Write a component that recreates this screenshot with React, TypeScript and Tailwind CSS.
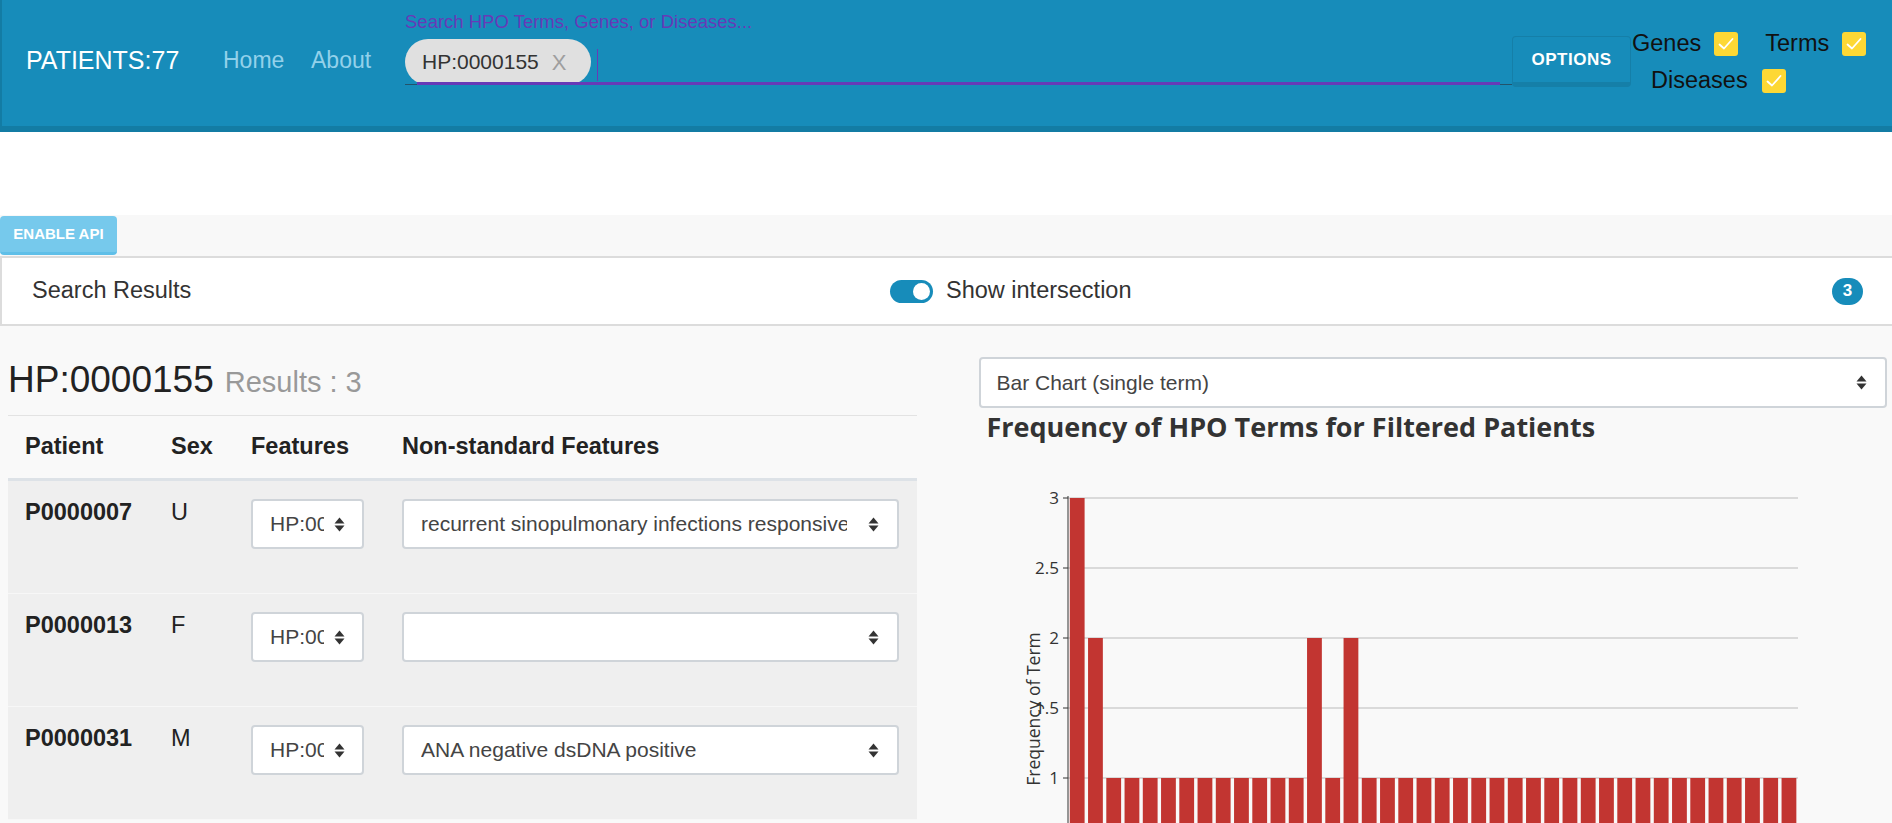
import React from "react";

function Check() {
  return (
    <span className="inline-flex h-[24px] w-[24px] items-center justify-center rounded-[3px] bg-[#fdd835]">
      <svg width="20" height="20" viewBox="0 0 20 20">
        <path d="M3.5 10.5 L8 14.5 L16.5 5" fill="none" stroke="#fff" strokeWidth="1.8" strokeLinecap="round" strokeLinejoin="round" />
      </svg>
    </span>
  );
}

function Arrows() {
  return (
    <svg width="13" height="17" viewBox="0 0 13 17" className="shrink-0">
      <path d="M6.5 1.5 L11.5 7.5 H1.5 Z" fill="#333" />
      <path d="M6.5 15.5 L11.5 9.5 H1.5 Z" fill="#333" />
    </svg>
  );
}

const bars: number[] = [3, 2, 1, 1, 1, 1, 1, 1, 1, 1, 1, 1, 1, 2, 1, 2, ...Array(24).fill(1)];

function Chart() {
  const y = (v: number) => 52 + (3 - v) * 140;
  const ticks = [
    { v: 3, l: "3" },
    { v: 2.5, l: "2.5" },
    { v: 2, l: "2" },
    { v: 1.5, l: "1.5" },
    { v: 1, l: "1" },
  ];
  return (
    <svg width="908" height="380" viewBox="0 0 908 380" className="block" style={{ fontFamily: "'Open Sans', 'Liberation Sans', sans-serif" }}>
      {ticks.map((t) => (
        <g key={t.l}>
          <line x1="89" x2="819" y1={y(t.v)} y2={y(t.v)} stroke="#cfcfcf" strokeWidth="1.5" />
          <line x1="84" x2="89" y1={y(t.v)} y2={y(t.v)} stroke="#333" strokeWidth="1" />
          <text x="80" y={y(t.v) + 6} textAnchor="end" fontSize="17" fill="#333">{t.l}</text>
        </g>
      ))}
      {bars.map((v, i) => (
        <rect key={i} x={89 + i * 18.25 + 1.8} y={y(v)} width="14.8" height={380 - y(v)} fill="#c23531" />
      ))}
      <line x1="89" x2="89" y1="50" y2="380" stroke="#333" strokeWidth="1" />
      <text x="56" y="263" transform="rotate(-90 56 263)" textAnchor="middle" dominantBaseline="middle" fontSize="17.5" fill="#333">Frequency of Term</text>
    </svg>
  );
}

function Select({ text, narrow }: { text: string; narrow?: boolean }) {
  if (narrow) {
    return (
      <div className="flex h-[50px] w-[113px] items-center rounded-[4px] border-2 border-[#cfd4d9] bg-white pl-[17px] pr-[15px]">
        <span className="w-[54px] min-w-0 overflow-hidden whitespace-nowrap text-[21px] text-[#444]">{text}</span>
        <span className="ml-[9px] flex"><Arrows /></span>
      </div>
    );
  }
  return (
    <div className="flex h-[50px] w-full min-w-0 items-center rounded-[4px] border-2 border-[#cfd4d9] bg-white pl-[17px] pr-[17px]">
      <span className="mr-[20px] min-w-0 flex-1 overflow-hidden whitespace-nowrap text-[21px] text-[#444]">{text}</span>
      <Arrows />
    </div>
  );
}

const rows = [
  { id: "P0000007", sex: "U", ns: "recurrent sinopulmonary infections responsive to antibiotics" },
  { id: "P0000013", sex: "F", ns: "" },
  { id: "P0000031", sex: "M", ns: "ANA negative dsDNA positive" },
];

export default function App() {
  return (
    <div className="h-[823px] w-full overflow-hidden bg-[#f9f9f9] text-[#333]" style={{ fontFamily: "'Liberation Sans', Arial, sans-serif" }}>
      {/* Header */}
      <header className="flex h-[132px] items-start border-b-[6px] border-l-2 border-[#137ca4] bg-[#178cba]">
        <div className="mt-[45px] w-[221px] pl-[24px] text-[25px] leading-[30px] text-white">PATIENTS:77</div>
        <div className="mt-[46px] w-[88px] text-[23px] leading-[28px] text-[#93d1ea]">Home</div>
        <div className="mt-[46px] w-[94px] text-[23px] leading-[28px] text-[#93d1ea]">About</div>
        <div className="w-[1107px]">
          <div className="mt-[11px] text-[18.5px] leading-[22px] text-[#673ab7]">Search HPO Terms, Genes, or Diseases...</div>
          <div className="relative mt-[6px] flex h-[46px] items-start border-b border-[#23536b]">
            <div className="flex h-[46px] items-center rounded-full bg-[#e0e0e0] pl-[17px] pr-[25px]">
              <span className="text-[21px] text-[#333]">HP:0000155</span>
              <span className="ml-[13px] text-[22px] text-[#9e9e9e]">X</span>
            </div>
            <div className="ml-[6px] mt-[10px] h-[32px] w-px bg-[#673ab7]" />
            <div className="absolute bottom-[-1px] left-[12px] right-[12px] h-[3px] bg-[#673ab7]" />
          </div>
        </div>
        <div className="mt-[36px] flex h-[51px] w-[119px] items-center justify-center rounded-[4px] border border-b-[5px] border-[#157fa8] bg-[#178cba] text-[17px] font-bold tracking-[0.5px] text-white">
          OPTIONS
        </div>
        <div className="mt-[32px] w-[260px] text-[23.5px] leading-none text-[#111]">
          <div className="flex h-[24px] items-center pl-px">
            <span>Genes</span>
            <span className="ml-[13px] flex"><Check /></span>
            <span className="ml-[27px]">Terms</span>
            <span className="ml-[13px] flex"><Check /></span>
          </div>
          <div className="mt-[13px] flex h-[24px] items-center pl-[20px]">
            <span>Diseases</span>
            <span className="ml-[14px] flex"><Check /></span>
          </div>
        </div>
      </header>

      {/* White spacer */}
      <div className="h-[83px] bg-white" />

      {/* Enable API strip */}
      <div className="h-[41px] bg-[#f8f8f8] pt-px">
        <div className="flex h-[39px] w-[117px] items-center justify-center rounded-[4px] border-b-[3px] border-[#5fbfe8] bg-[#76c9ec] text-[15px] font-bold text-white">
          ENABLE API
        </div>
      </div>

      {/* Search results panel */}
      <div className="flex h-[70px] items-center border-y-2 border-l-2 border-[#dcdcdc] bg-white">
        <div className="w-[888px] pl-[30px] text-[23.5px] text-[#333]">Search Results</div>
        <div className="relative h-[23px] w-[43px] rounded-full bg-[#178cba]">
          <div className="absolute right-[3px] top-[3px] h-[17px] w-[17px] rounded-full bg-white" />
        </div>
        <div className="ml-[13px] text-[23.5px] text-[#333]">Show intersection</div>
        <div className="ml-auto mr-[29px] flex h-[27px] min-w-[31px] items-center justify-center rounded-full bg-[#178cba] px-[8px] text-[17px] font-bold text-white">
          3
        </div>
      </div>

      {/* Main content */}
      <div className="grid grid-cols-2 gap-[62px] pl-[8px] pr-[5px]">
        {/* Left */}
        <div className="min-w-0">
          <div className="mt-[32px] flex items-baseline leading-[44px]">
            <span className="text-[37px] text-[#222]">HP:0000155</span>
            <span className="ml-[11px] text-[29px] text-[#999]">Results : 3</span>
          </div>
          <div className="mt-[11px] h-px bg-[#e3e3e3]" />
          <div className="grid h-[65px] grid-cols-[146px_80px_151px_minmax(0,1fr)] items-center border-b-[3px] border-[#dde2e7] text-[23.5px] font-bold text-[#222]">
            <div className="pl-[17px]">Patient</div>
            <div className="pl-[17px]">Sex</div>
            <div className="pl-[17px]">Features</div>
            <div className="pl-[17px]">Non-standard Features</div>
          </div>
          {rows.map((r) => (
            <div key={r.id} className="grid h-[113px] grid-cols-[146px_80px_151px_minmax(0,1fr)] border-b border-[#f7f7f7] bg-[#efefef] text-[23.5px] text-[#222]">
              <div className="pl-[17px] pt-[17px] font-bold leading-[28px]">{r.id}</div>
              <div className="pl-[17px] pt-[17px] leading-[28px]">{r.sex}</div>
              <div className="pl-[17px] pt-[18px]">
                <Select text="HP:0000155" narrow />
              </div>
              <div className="min-w-0 pl-[17px] pr-[18px] pt-[18px]">
                <Select text={r.ns} />
              </div>
            </div>
          ))}
        </div>

        {/* Right */}
        <div className="min-w-0">
          <div className="mt-[31px] flex h-[51px] items-center rounded-[4px] border-2 border-[#cfd4d9] bg-white pl-[16px] pr-[17px]">
            <span className="flex-1 text-[21px] text-[#444]">Bar Chart (single term)</span>
            <Arrows />
          </div>
          <div
            className="h-[38px] pl-[8px] text-[27px] font-bold leading-[38px] text-[#333]"
            style={{ fontFamily: "'Open Sans', 'Liberation Sans', sans-serif" }}
          >
            Frequency of HPO Terms for Filtered Patients
          </div>
          <Chart />
        </div>
      </div>
    </div>
  );
}
